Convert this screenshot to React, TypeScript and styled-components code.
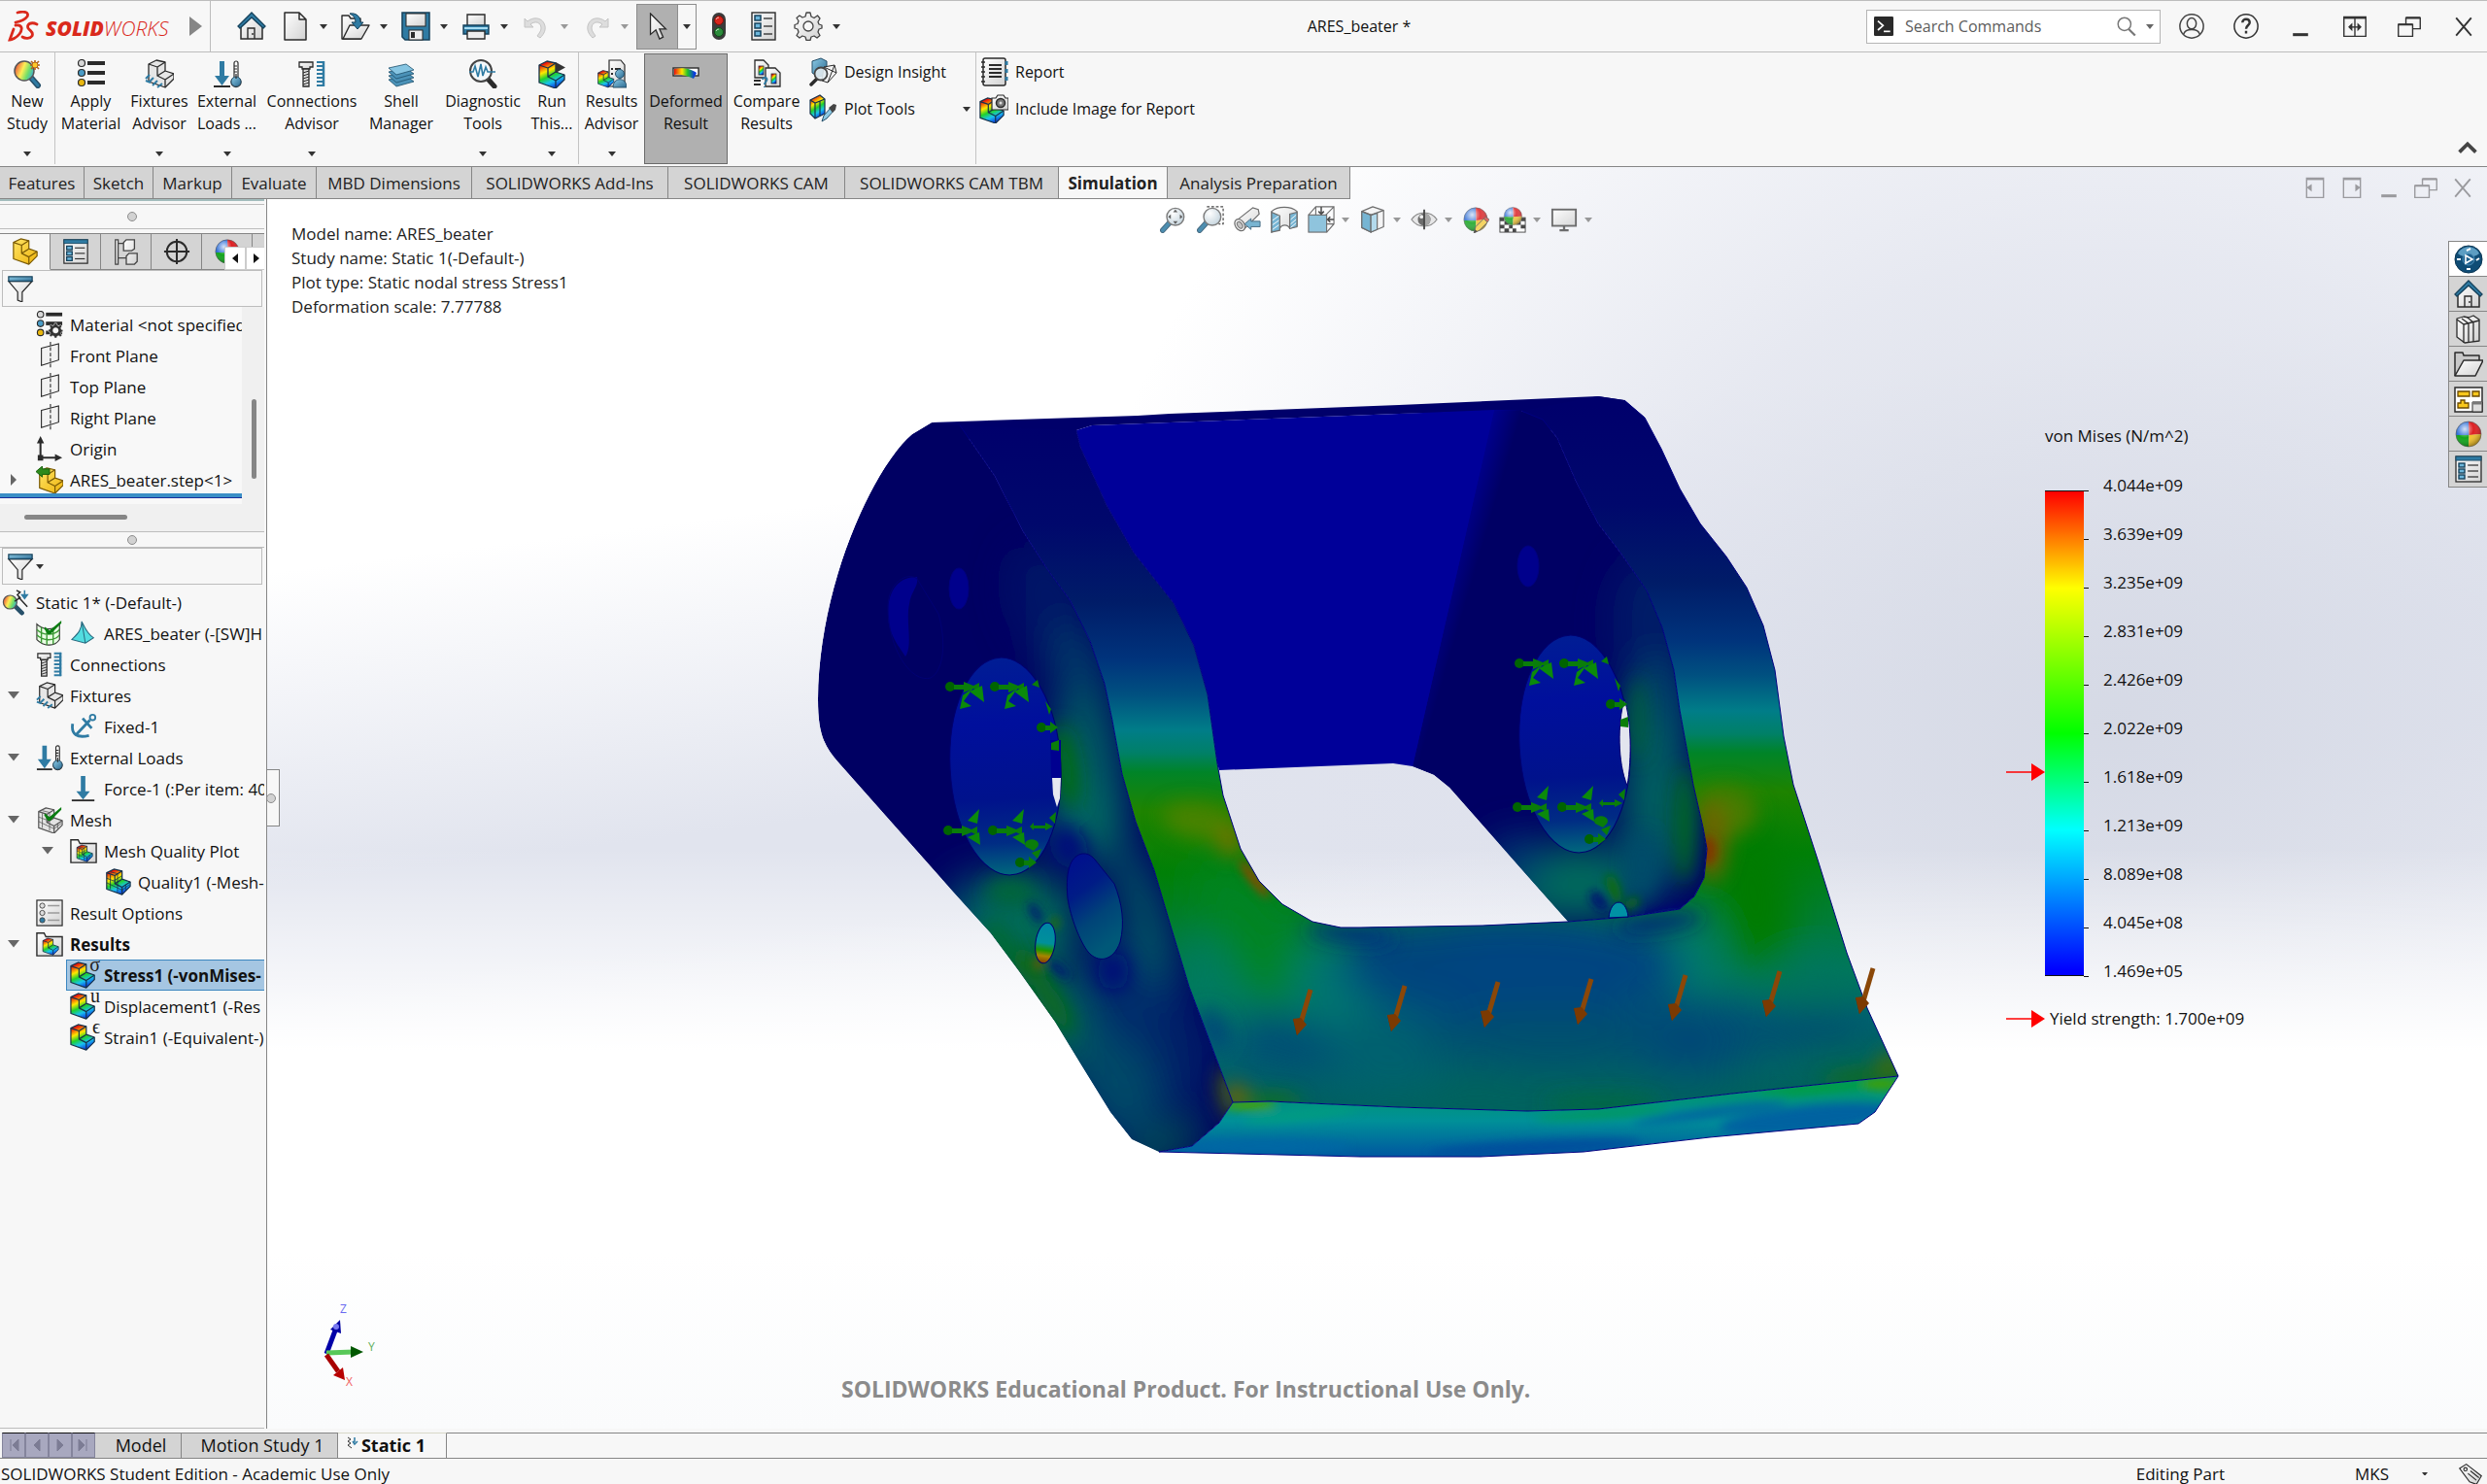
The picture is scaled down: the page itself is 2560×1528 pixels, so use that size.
import React from "react";
import styled, { createGlobalStyle, css } from "styled-components";

const FONT = '"Open Sans", "Noto Sans", sans-serif';

const GlobalStyle = createGlobalStyle`
  *, *::before, *::after { box-sizing: border-box; }
  body { margin: 0; background: #f7f7f7; color: #111; font-family: ${FONT}; font-size: 16px; line-height: 23px; }
  button, input { font: inherit; color: inherit; }
  button { margin: 0; padding: 0; border: 0; background: none; cursor: pointer; }
  ul { margin: 0; padding: 0; list-style: none; }
  p, h1 { margin: 0; font: inherit; }
`;

/* ---------- icons ---------- */

const K = "#2b2b2b";
const B = "#2f7ba3";

const SharedPaint = () => (
  <HiddenSvg aria-hidden="true" width="0" height="0">
    <defs>
      <linearGradient id="rainbow" x1="0.2" y1="0" x2="0.6" y2="1">
        <stop offset="0.08" stopColor="#e8120c" />
        <stop offset="0.35" stopColor="#ffe800" />
        <stop offset="0.55" stopColor="#1fd12c" />
        <stop offset="0.75" stopColor="#19c3ee" />
        <stop offset="1" stopColor="#0b2be0" />
      </linearGradient>
      <linearGradient id="rainbowX" x1="0" y1="0" x2="1" y2="0">
        <stop offset="0" stopColor="#e8120c" />
        <stop offset="0.35" stopColor="#ffe800" />
        <stop offset="0.6" stopColor="#1fc12c" />
        <stop offset="0.9" stopColor="#0b3be0" />
      </linearGradient>
      <linearGradient id="paper" x1="0" y1="0" x2="1" y2="1">
        <stop offset="0" stopColor="#ffffff" />
        <stop offset="1" stopColor="#d2d2d2" />
      </linearGradient>
      <linearGradient id="blue" x1="0" y1="0" x2="1" y2="1">
        <stop offset="0" stopColor="#8ccbe6" />
        <stop offset="1" stopColor="#2c6a91" />
      </linearGradient>
      <linearGradient id="yellow" x1="0" y1="0" x2="1" y2="1">
        <stop offset="0" stopColor="#ffe566" />
        <stop offset="1" stopColor="#eeb30c" />
      </linearGradient>
      <radialGradient id="shine" cx="0.35" cy="0.3" r="0.7">
        <stop offset="0" stopColor="#fff" stopOpacity="0.8" />
        <stop offset="0.5" stopColor="#fff" stopOpacity="0" />
        <stop offset="1" stopColor="#000" stopOpacity="0.3" />
      </radialGradient>
      <radialGradient id="lens" cx="0.35" cy="0.3" r="0.8">
        <stop offset="0" stopColor="#fff" />
        <stop offset="1" stopColor="#b7cad6" />
      </radialGradient>
      <linearGradient id="lensRainbow" x1="0" y1="0.3" x2="1" y2="0.7">
        <stop offset="0" stopColor="#e84a3c" />
        <stop offset="0.4" stopColor="#ffee55" />
        <stop offset="0.7" stopColor="#6ede6a" />
        <stop offset="1" stopColor="#39a9e0" />
      </linearGradient>
    </defs>
  </HiddenSvg>
);

const HiddenSvg = styled.svg`
  position: absolute;
`;

const block = (fill: string, stroke = K, grid = false) => (
  <g fill={fill} stroke={stroke} strokeWidth="1.3" strokeLinejoin="round">
    <path d="M1 5 9 1 18 3V12L27 15V20L18 29 1 23Z" />
    <path fill="none" d="M1 5 10 8 18 3M10 8V17L18 12M10 17 18 21 27 15M18 21V29" />
    {grid && <path fill="none" strokeWidth="0.8" d="M1 11 9 14M1 16 18 24 26 18M5 7V23M13 6V26M9 14 18 8M22 18V24M5 4 13 6" />}
  </g>
);

const ball = (
  <g>
    <path d="M15 2A13 13 0 0 0 2 16H15.500Z" fill="#2f6fd6" />
    <path d="M15 2A13 13 0 0 1 28 15L15.500 16Z" fill="#dd1f22" />
    <path d="M2 16A13 13 0 0 0 15 28L15.500 16Z" fill="#12a41d" />
    <path d="M28 15A13 13 0 0 1 15 28L15.500 16Z" fill="#f0c02b" />
    <circle cx="15" cy="15" r="13" fill="url(#shine)" stroke="#555" strokeWidth="0.6" />
  </g>
);

const listCard = (
  <g>
    <rect x="2" y="2" width="26" height="26" fill="url(#paper)" stroke={K} strokeWidth="1.3" />
    <rect x="2" y="2" width="26" height="4" fill={B} stroke="#1d4f6b" />
    {[9, 15, 21].map((y) => (
      <g key={y}>
        <rect x="5" y={y} width="6" height="4" fill="#6db7dc" stroke="#16425c" strokeWidth="1.4" />
        <path d={`M14 ${y + 2}H25`} stroke={K} strokeWidth="1.2" />
      </g>
    ))}
  </g>
);

const magnifier = (fill: string, handle = B) => (
  <g>
    <path d="M11 18 3 27" stroke="#27506a" strokeWidth="6" strokeLinecap="round" />
    <path d="M11 18 3 27" stroke={handle} strokeWidth="4" strokeLinecap="round" />
    <circle cx="17" cy="12" r="9.500" fill={fill} stroke="#666" strokeWidth="1.500" />
  </g>
);

const bolt = (
  <g>
    <path d="M2 3H16V8H13V10H5V8H2Z" fill="url(#paper)" stroke={K} strokeWidth="1.3" />
    <path d="M6 10H12V28H6Z" fill="#ddd" stroke={K} strokeWidth="1.3" />
    <path d="M6 14 12 12M6 17 12 15M6 20 12 18M6 23 12 21M6 26 12 24" stroke={K} strokeWidth="1" />
    <path d="M20 3H28M20 7H28M20 11H28M20 15H28M20 19H28M20 23H28M20 27H28" stroke={B} strokeWidth="2" />
    <path d="M27 2V28" stroke={B} strokeWidth="2.500" />
  </g>
);

const loads = (
  <g>
    <path d="M7 2H12V17H17L9.500 27 2 17H7Z" fill={B} />
    <path d="M1 28H18" stroke={K} strokeWidth="2" />
    <path d="M22 4A2 2 0 0 1 26 4V19A5 5 0 1 1 22 19Z" fill="#fff" stroke={K} strokeWidth="1.2" />
    <circle cx="24" cy="23" r="5" fill="url(#blue)" stroke="#27506a" />
    <path d="M22 7H25M22 10H25M22 13H25M24 15V20" stroke={K} strokeWidth="1.2" />
  </g>
);

const matList = (
  <g>
    {[
      [4, "#d8d8d8"],
      [14, "#4a9cc7"],
      [24, "#e9b70f"],
    ].map(([y, c]) => (
      <g key={String(y)}>
        <circle cx="5" cy={y as number} r="3.500" fill={c as string} stroke={K} strokeWidth="1.2" />
        <rect x="11" y={(y as number) - 2} width="18" height="4" fill={K} />
      </g>
    ))}
  </g>
);

const gearPath =
  "M13 1H17L18 5 21 6.500 24.500 4 27 7 25 10.500 26 13 29 14V17L26 18 25 21 27 24.500 24 27 21 25 18 26 17 29.500H13L12 26 9 25 6 27 3 24.500 5 21 4 18 1 17V13.500L4 12.500 5 9.500 3 6.500 6 4 9 6 12 5Z";

const funnel = (
  <g>
    <path d="M2 7 12 19V28L17 30V19L28 7Z" fill="url(#paper)" stroke={K} strokeWidth="1.3" />
    <rect x="2" y="2" width="26" height="5" fill="url(#blue)" stroke="#16425c" strokeWidth="1.3" />
  </g>
);

const folderBase = (
  <path d="M1 28V3H9L11 7H29V28Z" fill="url(#paper)" stroke={K} strokeWidth="1.5" />
);

const home = (
  <g>
    <path d="M4 15V28H26V15L15 5Z" fill="url(#paper)" stroke={K} strokeWidth="1.5" />
    <path d="M1 15 15 1 29 15 27 17 15 6 3 17Z" fill={B} stroke="#16425c" strokeWidth="1.3" />
    <path d="M11 28V17H18V28M16 22V24" fill="none" stroke={K} strokeWidth="1.4" />
  </g>
);

const check = <path d="M10 8 15 12 28 1V4L16 16H13L9 10Z" fill="#0a7d12" />;

const GLYPHS: Record<string, React.ReactNode> = {
  home,
  doc: <path d="M4 1H19L26 8V29H4ZM19 1V8H26" fill="url(#paper)" stroke={K} strokeWidth="1.5" strokeLinejoin="round" />,
  open: (
    <g stroke={K} strokeWidth="1.4" strokeLinejoin="round">
      <path d="M1 28V4H8L10 7H20V28Z" fill="url(#paper)" />
      <path d="M2 28 9 14H29L21 28Z" fill="url(#paper)" />
      <path d="M9 2C16 1 20 5 20 11H23L17 18 11 11H15C15 7 13 4 9 2Z" fill={B} stroke="#16425c" strokeWidth="1" />
    </g>
  ),
  save: (
    <g>
      <path d="M1 1H29V29H4L1 26Z" fill={B} stroke="#16425c" strokeWidth="1.5" />
      <rect x="5" y="2" width="20" height="13" fill="url(#paper)" stroke={K} />
      <rect x="8" y="19" width="14" height="10" fill="#ececec" stroke={K} />
      <rect x="10" y="21" width="4" height="6" fill={K} />
    </g>
  ),
  print: (
    <g stroke={K} strokeWidth="1.4">
      <path d="M6 14V3H24V14" fill="url(#paper)" />
      <path d="M2 14H28V23H2Z" fill={B} stroke="#16425c" />
      <path d="M3 17H27" stroke="#a7dcf2" strokeWidth="2" />
      <path d="M6 20H24V28H6Z" fill="#eee" />
    </g>
  ),
  undo: <path d="M3 7V16H12L9 13C14 9 20 11 20 17 20 20 18 22 16 25L19 27C23 23 26 18 23 12 20 6 12 5 6 10Z" fill="#ddd" stroke="#c4c4c4" />,
  redo: <path d="M27 7V16H18L21 13C16 9 10 11 10 17 10 20 12 22 14 25L11 27C7 23 4 18 7 12 10 6 18 5 24 10Z" fill="#ddd" stroke="#c4c4c4" />,
  cursor: <path d="M7 1V24L13 19 17 29 21 27 17 18H24Z" fill="url(#paper)" stroke={K} strokeWidth="1.4" />,
  traffic: (
    <g>
      <rect x="8" y="1" width="14" height="28" rx="7" fill="#3b3b3b" />
      <circle cx="15" cy="9" r="4.500" fill="#d8251c" stroke="#7c120c" />
      <circle cx="15" cy="21" r="4.500" fill="#2c8c3b" stroke="#0e4d18" />
      <path d="M12 8A3 3 0 0 1 15 6M12 20A3 3 0 0 1 15 18" stroke="#fff" fill="none" opacity="0.7" />
    </g>
  ),
  options: (
    <g>
      <rect x="3" y="1" width="24" height="28" fill="url(#paper)" stroke={K} strokeWidth="1.4" />
      {[4, 12, 20].map((y) => (
        <g key={y}>
          <rect x="6" y={y} width="6" height="5" fill="#6db7dc" stroke="#16425c" strokeWidth="1.5" />
          <path d={`M15 ${y + 3}H24`} stroke={K} strokeWidth="1.3" />
        </g>
      ))}
    </g>
  ),
  gear: (
    <g fill="url(#paper)" stroke="#444" strokeWidth="1.3" strokeLinejoin="round">
      <path d={gearPath} />
      <circle cx="15" cy="15" r="5" fill="#f7f7f7" />
    </g>
  ),
  newStudy: (
    <g>
      <path d="M19 19 26 27" stroke="#27506a" strokeWidth="6" strokeLinecap="round" />
      <path d="M19 19 26 27" stroke={B} strokeWidth="3" strokeLinecap="round" />
      <circle cx="12" cy="12" r="10" fill="url(#lensRainbow)" stroke="#555" strokeWidth="1.500" />
      <path d="M23 1V11M18 6H28M19 2 27 10M27 2 19 10" stroke="#b0621c" strokeWidth="1.6" />
      <circle cx="23" cy="6" r="3" fill="#ffc928" stroke="#b0621c" />
    </g>
  ),
  material: matList,
  fixture: (
    <g>
      <g transform="translate(3 0)">{block("#e6e6e6")}</g>
      <path d="M1 20 5 16M4 24 9 19M8 27 13 22M13 29 18 25M1 22 6 24" stroke={B} strokeWidth="2" />
    </g>
  ),
  loads,
  bolt,
  shell: (
    <g fill={B} stroke="#1d4f6b" strokeWidth="0.8">
      {[21, 17, 13, 9].map((y, i) => (
        <path key={y} d={`M2 ${y} 20 ${y - 4} 28 ${y + 2} 10 ${y + 7}Z`} fill={i === 3 ? "#86c5e2" : "#4b92b8"} />
      ))}
    </g>
  ),
  diag: (
    <g>
      <path d="M19 19 27 28" stroke={K} strokeWidth="5" strokeLinecap="round" />
      <circle cx="13" cy="12" r="11" fill="#f4f8fa" stroke="#444" strokeWidth="2" />
      <path d="M1 13H5L7 7 10 18 13 5 15 17 18 8 20 13H28" fill="none" stroke={B} strokeWidth="1.6" />
    </g>
  ),
  run: (
    <g>
      <g transform="translate(1 1)">{block("url(#rainbow)", "#16324a")}</g>
      <path d="M19 3 29 8.500 19 14Z" fill="#333" />
    </g>
  ),
  resAdvisor: (
    <g>
      <path d="M12 1H24L28 6V28H12Z" fill="url(#paper)" stroke={K} strokeWidth="1.2" />
      <path d="M14 10H16M14 15H16M18 10H24" stroke={K} strokeWidth="2" />
      <g transform="translate(0 11) scale(0.62)">{block("url(#rainbow)", "#16324a")}</g>
      <circle cx="23" cy="15" r="4.500" fill="url(#blue)" stroke="#27506a" />
      <path d="M16 29C16 18 30 18 30 29Z" fill="url(#blue)" stroke="#27506a" />
    </g>
  ),
  deformed: (
    <g>
      <rect x="2" y="9" width="26" height="8" fill="#fff" stroke={K} strokeWidth="1.4" />
      <path d="M3 10C14 8 22 11 26 14L23 20C16 17 10 15 3 16Z" fill="url(#rainbowX)" />
    </g>
  ),
  compare: (
    <g>
      <path d="M3 1H12L17 6V19H3Z" fill="url(#paper)" stroke={K} strokeWidth="1.3" />
      <path d="M14 9H24L29 14V28H14Z" fill="url(#paper)" stroke={K} strokeWidth="1.3" />
      <rect x="7" y="7" width="5" height="9" fill="url(#rainbow)" stroke={K} strokeWidth="0.8" />
      <rect x="20" y="15" width="5" height="10" fill="url(#rainbow)" stroke={K} strokeWidth="0.8" />
      <path d="M2 22H9M2 26H9" stroke={K} strokeWidth="2" />
      <path d="M11 21C12 17 17 19 15 22 14 24 13 24 13 26M13 28V29" fill="none" stroke={B} strokeWidth="2" />
    </g>
  ),
  insight: (
    <g>
      <path d="M4 4 13 1 19 4V18L10 20 4 16Z" fill="url(#blue)" stroke="#27506a" />
      <path d="M16 10 27 8 29 16 20 26 14 24ZM16 10 29 16M27 8 20 26" fill="#f4f4f4" stroke={K} strokeWidth="1" />
      <path d="M9 22 3 28" stroke={K} strokeWidth="3.500" strokeLinecap="round" />
      <circle cx="13" cy="17" r="6.500" fill="#e2ecf1" fillOpacity="0.9" stroke="#444" strokeWidth="1.8" />
    </g>
  ),
  plotTools: (
    <g>
      <path d="M2 6 12 1 17 5V20L7 25 2 20Z" fill="url(#rainbow)" stroke="#16324a" strokeWidth="1.2" />
      <path d="M2 6 7 9 17 5M7 9V25M12 7V22" fill="none" stroke="#16324a" strokeWidth="1.2" />
      <path d="M14 28 16 22 24 13 27 16 19 25Z" fill="#8ccbe6" stroke="#27506a" />
      <path d="M21 14 26 10 29 11 28 16 25 19Z" fill="#444" />
    </g>
  ),
  report: (
    <g>
      <rect x="4" y="1" width="23" height="28" rx="2" fill="url(#paper)" stroke={K} strokeWidth="1.5" />
      <path d="M10 8H23M10 12H23M10 16H23M10 20H23" stroke={K} strokeWidth="1.8" />
      <path d="M2 5H6M2 10H6M2 15H6M2 20H6M2 25H6" stroke={K} strokeWidth="1.5" />
      <path d="M28 4V8M28 12V16M28 20V24" stroke={B} strokeWidth="3" />
    </g>
  ),
  camera: (
    <g>
      <g transform="translate(0 3) scale(0.93)">{block("url(#rainbow)", "#16324a")}</g>
      <path d="M13 4H17L19 1H25L27 4H30V16H13Z" fill="url(#paper)" stroke={K} strokeWidth="1.2" />
      <circle cx="22" cy="9" r="4.500" fill="#777" stroke={K} strokeWidth="1.5" />
      <circle cx="22" cy="9" r="1.500" fill="#ddd" />
    </g>
  ),
  zoomFit: (
    <g>
      {magnifier("url(#lens)")}
      <path d="M17 4 19.500 7H14.500ZM17 20 19.500 17H14.500ZM9 12 12 9.500V14.500ZM25 12 22 9.500V14.500Z" fill="#444" />
    </g>
  ),
  zoomArea: (
    <g>
      <path d="M11 1H29V20H24" fill="none" stroke={K} strokeWidth="1.3" strokeDasharray="3 2" />
      {magnifier("url(#lens)")}
    </g>
  ),
  prevView: (
    <g>
      <path d="M2 17 21 2 27 4 28 9 10 27Z" fill="url(#paper)" stroke="#555" strokeWidth="1.3" />
      <ellipse cx="6.500" cy="21.500" rx="5" ry="7" transform="rotate(-35 6 21)" fill="#eee" stroke="#555" strokeWidth="1.3" />
      <ellipse cx="6.500" cy="21.500" rx="2.500" ry="4" transform="rotate(-35 6 21)" fill="#bbb" stroke="#555" />
      <path d="M12 20 19 14V17H29V23H19V26Z" fill="#62a9cb" stroke="#27506a" />
    </g>
  ),
  section: (
    <g stroke="#555" strokeWidth="1.3">
      <path d="M1 6C8 0 22 0 29 6V22L21 25C19 20 12 20 10 25L1 29Z" fill="url(#paper)" />
      <path d="M1 7 10 11V27L1 29Z" fill="#5fa9cd" />
      <path d="M29 7 21 9V25L29 23Z" fill="#5fa9cd" />
      <path d="M2 16 9 11M2 21 9 16M2 26 9 21M22 15 28 10M22 20 28 15M22 24 28 19" stroke="#fff" strokeWidth="1" />
    </g>
  ),
  orient: (
    <g stroke="#555" strokeWidth="1.2" fill="none">
      <path d="M1 10 9 1H29V20L21 29M9 1V10M29 1 20 10M9 20H29" />
      <rect x="1" y="10" width="20" height="19" fill="#7dbbd8" />
      <path d="M15 1V9M12 6 15 9 18 6M29 15H22M25 12 22 15 25 18" stroke={K} strokeWidth="1.6" />
    </g>
  ),
  cube: (
    <g stroke="#555" strokeWidth="1.3" strokeLinejoin="round">
      <path d="M3 6 15 1 27 5V23L13 29 3 24Z" fill="#f4f4f4" />
      <path d="M3 6 13 10V29L3 24Z" fill="#5fa9cd" />
      <path d="M13 10 20 8V26L13 29Z" fill="#a7d5ea" />
      <path d="M3 6 13 10 27 5" fill="none" />
    </g>
  ),
  eye: (
    <g>
      <path d="M1 15C8 5 22 5 29 15 22 25 8 25 1 15Z" fill="#e5e5e5" stroke="#777" strokeWidth="1.3" />
      <circle cx="15" cy="15" r="7" fill="#555" />
      <path d="M15 8A7 7 0 0 1 15 22Z" fill="#999" />
      <circle cx="12" cy="12" r="2" fill="#eee" />
      <path d="M15 4V26" stroke={K} strokeWidth="2" />
    </g>
  ),
  ball,
  ballPencil: (
    <g>
      {ball}
      <path d="M13 30 15 23 24 14 28 18 19 27Z" fill="#f5cf4b" stroke="#555" />
      <path d="M24 14 26 12 30 15 28 18Z" fill="#d6534a" stroke="#555" strokeWidth="0.8" />
      <path d="M13 30 14 26 17 28Z" fill="#333" />
    </g>
  ),
  scene: (
    <g>
      <rect x="1" y="13" width="28" height="16" fill="#fff" stroke={K} />
      <path d="M1 13H6V17H1ZM24 13H29V17H24ZM6 17H11V21H6ZM19 17H24V21H19ZM1 21H6V25H1ZM11 21H15V25H11ZM24 21H29V25H24ZM6 25H11V29H6ZM15 25H19V29H15Z" fill={K} />
      <g transform="translate(4 0) scale(0.76)">{ball}</g>
    </g>
  ),
  monitor: (
    <g>
      <rect x="2" y="4" width="26" height="18" fill="url(#paper)" stroke="#555" strokeWidth="2" />
      <path d="M15 22V26M10 27H20" stroke="#555" strokeWidth="2.500" />
    </g>
  ),
  compass: (
    <g>
      <circle cx="15" cy="15" r="14" fill="#0f4c75" stroke="#0a3552" />
      <path d="M4 9C8 0 22 0 26 9 20 14 10 14 4 9Z" fill="#6fb1d6" opacity="0.8" />
      <circle cx="15" cy="15" r="6" fill="#1d5f8c" stroke="#4c8fb8" />
      <path d="M12 11 19 15 12 19Z" fill="none" stroke="#fff" strokeWidth="1.6" />
      <path d="M13 6 17 4M3 15H7M23 16 26 14M13 25H17" stroke="#fff" strokeWidth="2" />
    </g>
  ),
  books: (
    <g fill="url(#paper)" stroke={K} strokeWidth="1.3" strokeLinejoin="round">
      <path d="M3 4 10 2 15 3 20 1 26 5V27L11 29 3 23Z" />
      <path d="M3 5 10 10V29M10 10 26 6M8 4 15 9V28M14 3 20 8V28" fill="none" />
    </g>
  ),
  folderOpen: (
    <g stroke={K} strokeWidth="1.5" strokeLinejoin="round">
      <path d="M1 27V3H9L10 6H26V12" fill="#c9c9c9" />
      <path d="M1 27 10 11H30L22 27Z" fill="url(#paper)" />
    </g>
  ),
  palette: (
    <g>
      <rect x="1" y="3" width="28" height="25" fill="#fff" stroke={K} strokeWidth="1.5" />
      <path d="M4 7H16V12H4ZM19 7H26V12H19ZM4 24V19H7V16H11V19H15V24Z" fill="#f8c71c" stroke="#6b4a00" strokeWidth="1.3" />
      <path d="M19 28V18H29V28Z" fill="#ddd" stroke={K} />
      <path d="M19 19H29" stroke="#777" strokeWidth="3" />
    </g>
  ),
  listCard,
  part: <g transform="translate(1 0)">{block("url(#yellow)", "#7a5a05")}</g>,
  partLinked: (
    <g>
      <g transform="translate(3 1)">{block("url(#yellow)", "#7a5a05")}</g>
      <path d="M0 6 7 0V3H15V9H7V12Z" fill="#2d8a1c" stroke="#155c0a" />
    </g>
  ),
  config: (
    <g fill="url(#paper)" stroke="#444" strokeWidth="1.4">
      <path d="M3 2H6V29H3ZM6 6H12M6 22H15" />
      <path d="M12 5 15 2H24V12L21 14H12ZM15 20 18 17H27V26L24 29H15Z" />
    </g>
  ),
  target: (
    <g fill="none" stroke={K} strokeWidth="2.200">
      <circle cx="15" cy="15" r="11" />
      <path d="M15 1V29M1 15H29" />
    </g>
  ),
  funnel,
  matGear: (
    <g>
      {matList}
      <g transform="translate(13 13) scale(0.58)" fill="#333" stroke="#f7f7f7">
        <path d={gearPath} />
        <circle cx="15" cy="15" r="5" fill="#f7f7f7" />
      </g>
    </g>
  ),
  plane: (
    <g fill="none" stroke={K} strokeWidth="1.2">
      <path d="M6 7 25 2V20L6 26Z" fill="#f2f2f2" />
      <path d="M16 0V30" strokeDasharray="4 2" />
    </g>
  ),
  origin: (
    <g>
      <path d="M5 6V25H24" fill="none" stroke={K} strokeWidth="2.200" />
      <path d="M5 1 9 9H1ZM29 25 21 21V29ZM2 22H8V28H2Z" fill={K} />
    </g>
  ),
  study: (
    <g>
      <path d="M15 20 22 27" stroke="#27506a" strokeWidth="5" strokeLinecap="round" />
      <circle cx="9" cy="15" r="7.500" fill="url(#lensRainbow)" stroke="#555" strokeWidth="1.3" />
      <path d="M16 2 20 4 17 7 20 10 14 14M18 9 28 20" fill="none" stroke={K} strokeWidth="1.6" />
      <path d="M25 2V8M22 7H28L25 11Z" stroke={B} fill={B} strokeWidth="1.6" />
    </g>
  ),
  meshPart: (
    <g>
      <path d="M1 5C8 12 20 12 26 5V22C20 31 8 29 1 22Z" fill="#e9ffe4" stroke="#333" strokeWidth="1.2" />
      <path d="M1 11C8 18 20 18 26 11M1 17C8 24 20 24 26 17M6 8V26M12 10V28M19 9V27" fill="none" stroke="#3c9a35" strokeWidth="1.5" />
      {check}
    </g>
  ),
  cone: <path d="M13 2C13 12 8 16 2 22L17 26 26 20C19 16 16 8 13 2ZM13 2 17 26" fill="#52dde0" stroke="#2a6a80" strokeWidth="1.1" />,
  anchor: (
    <g fill="none" stroke={B} strokeWidth="3">
      <circle cx="25" cy="5" r="3" strokeWidth="2" />
      <path d="M22 8 6 25M14 6 24 17M3 12C1 24 8 28 21 25" />
    </g>
  ),
  force: (
    <g>
      <path d="M12 1H17V18H22L14.500 27 7 18H12Z" fill={B} />
      <path d="M2 28H27" stroke={K} strokeWidth="2" />
    </g>
  ),
  mesh: (
    <g>
      <g transform="translate(2 1)">{block("#e3e3e3", "#555", true)}</g>
      {check}
    </g>
  ),
  folderMesh: (
    <g>
      {folderBase}
      <g transform="translate(7 8) scale(0.66)">{block("url(#rainbow)", "#16324a", true)}</g>
    </g>
  ),
  folderResult: (
    <g>
      {folderBase}
      <g transform="translate(7 8) scale(0.66)">{block("url(#rainbow)", "#16324a")}</g>
    </g>
  ),
  quality: <g transform="translate(2 0)">{block("url(#rainbow)", "#16324a", true)}</g>,
  resultOptions: (
    <g>
      <rect x="1" y="1" width="28" height="28" fill="url(#paper)" stroke={K} strokeWidth="1.3" />
      {[7, 15, 23].map((y) => (
        <g key={y}>
          <circle cx="7" cy={y} r="2.800" fill={y === 23 ? B : "#ddd"} stroke="#444" />
          <path d={`M13 ${y}H26`} stroke="#999" strokeWidth="1.6" />
        </g>
      ))}
    </g>
  ),
  result: block("url(#rainbow)", "#16324a"),
  user: (
    <g fill="none" stroke="#444" strokeWidth="1.6">
      <circle cx="15" cy="15" r="13" />
      <ellipse cx="15" cy="12" rx="5" ry="6" />
      <path d="M6 24C8 17 22 17 24 24" />
    </g>
  ),
  help: (
    <g fill="none" stroke="#333" strokeWidth="1.6">
      <circle cx="15" cy="15" r="13" />
      <path d="M11 11C11 6 19 6 19 11 19 14 15 14 15 18M15 20V23" strokeWidth="2.600" />
    </g>
  ),
  minimize: <path d="M6 25H24" stroke="currentColor" strokeWidth="3.500" />,
  split: (
    <g fill="none" stroke="currentColor" strokeWidth="1.6">
      <path d="M2 4H28V27H2ZM15 4V27M2 4H28" />
      <path d="M2 5H28" strokeWidth="2.500" />
      <path d="M7 16 12 11V21ZM23 16 18 11V21Z" fill="currentColor" stroke="none" />
      <path d="M9 16H21" />
    </g>
  ),
  restore: (
    <g fill="none" stroke="currentColor" strokeWidth="1.6">
      <path d="M2 13H19V27H2ZM11 13V5H28V18H19" />
      <path d="M2 13H19M11 5H28" strokeWidth="2.500" />
    </g>
  ),
  close: <path d="M6 5 24 26M24 5 6 26" stroke="currentColor" strokeWidth="2.200" />,
  dockLeft: (
    <g fill="none" stroke="currentColor" strokeWidth="1.6">
      <path d="M5 4H25V27H5Z" />
      <path d="M5 5H25" strokeWidth="2.500" />
      <path d="M5 15 11 11V20Z" fill="currentColor" stroke="none" />
    </g>
  ),
  dockRight: (
    <g fill="none" stroke="currentColor" strokeWidth="1.6">
      <path d="M5 4H25V27H5Z" />
      <path d="M5 5H25" strokeWidth="2.500" />
      <path d="M25 15 19 11V20Z" fill="currentColor" stroke="none" />
    </g>
  ),
  up: <path d="M6 20 15 11 24 20" fill="none" stroke="#444" strokeWidth="4" />,
  search: (
    <g fill="none" stroke="#777" strokeWidth="2">
      <circle cx="12" cy="12" r="9" />
      <path d="M18 19 27 28" strokeWidth="3" />
    </g>
  ),
  prompt: (
    <g>
      <rect x="0" y="0" width="30" height="30" rx="2" fill="#2a2a2a" />
      <path d="M6 7 14 14 6 21" fill="none" stroke="#fff" strokeWidth="2.500" />
      <path d="M15 23H25" stroke="#fff" strokeWidth="2.500" />
    </g>
  ),
  tag: (
    <g fill="url(#paper)" stroke={K} strokeWidth="1.3">
      <path d="M2 8 10 3 28 17 22 27 14 24Z" />
      <circle cx="9" cy="9" r="2" />
      <path d="M12 14 22 22M15 11 25 19" fill="none" />
    </g>
  ),
};

const Svg = styled.svg`
  display: block;
  flex: none;
`;

const Icon = ({ name, size = 28 }: { name: string; size?: number }) => (
  <Svg aria-hidden="true" viewBox="0 0 30 30" width={size} height={size}>
    {GLYPHS[name]}
  </Svg>
);

const Triangle = ({ tone = "#333", size = 8 }: { tone?: string; size?: number }) => (
  <Svg aria-hidden="true" viewBox="0 0 8 5" width={size} height={(size * 5) / 8}>
    <path d="M0 0H8L4 5Z" fill={tone} />
  </Svg>
);

/* ---------- frame ---------- */

const Frame = styled.div`
  display: flex;
  flex-direction: column;
  min-height: 100vh;
  border-top: 1px solid #bdbdbd;
`;

const TitleBar = styled.header`
  display: flex;
  align-items: center;
  height: 53px;
  border-bottom: 1px solid #bdbdbd;
  background: #f7f7f7;
`;

const Brand = styled.div`
  display: flex;
  align-items: center;
  align-self: stretch;
  width: 217px;
  padding-left: 8px;
  border-right: 1px solid #bdbdbd;
`;

const BrandName = styled.span`
  width: 148px;
  margin-left: 7px;
  padding-top: 4px;
  color: #da291c;
  font: italic 300 21px/24px "Open Sans", sans-serif;
  b { font-weight: 800; }
`;

const IconButton = styled.button<{ $w?: number; $tone?: string }>`
  display: flex;
  align-items: center;
  justify-content: center;
  width: ${(p) => p.$w ?? 34}px;
  height: 34px;
  color: ${(p) => p.$tone ?? "#333"};
`;

const CaretButton = styled(IconButton)`
  width: 24px;
`;

const ToolGroup = styled.div`
  display: flex;
  margin-right: 4px;
`;

const HomeSlot = styled.div`
  margin: 0 11px 0 25px;
`;

const SelectTool = styled.div`
  display: flex;
  height: 47px;
  margin-left: -4px;
  border: 1px solid #8d8d8d;
`;

const SelectMain = styled.button`
  display: flex;
  align-items: center;
  justify-content: center;
  width: 42px;
  border-right: 1px solid #8d8d8d;
  background: #b0b0b0;
`;

const SelectCaret = styled.button`
  display: flex;
  align-items: center;
  justify-content: center;
  width: 18px;
`;

const ToolRun = styled.div`
  display: flex;
  gap: 12px;
  margin-left: 6px;
`;

const DocTitle = styled.h1`
  flex: 1;
  text-align: center;
`;

const SearchBox = styled.div`
  display: flex;
  align-items: center;
  width: 303px;
  height: 35px;
  margin-right: 16px;
  padding-left: 7px;
  border: 1px solid #b5b5b5;
  background: #fff;
`;

const SearchInput = styled.input`
  flex: 1;
  min-width: 0;
  margin: 0 0 0 12px;
  padding: 0;
  border: 0;
  outline: 0;
  background: none;
  &::placeholder { color: #5c5c5c; opacity: 1; }
`;

const WindowButtons = styled.div`
  display: flex;
  gap: 24px;
  padding-right: 8px;
`;

/* ---------- ribbon ---------- */

const Ribbon = styled.div`
  display: flex;
  height: 118px;
  border-bottom: 1px solid #868686;
  background: #f7f7f7;
`;

const RibbonGroup = styled.div<{ $last?: boolean }>`
  display: flex;
  height: 115px;
  padding-top: 1px;
  border-right: ${(p) => (p.$last ? "0" : "1px solid #c4c4c4")};
`;

const RibbonButton = styled.button<{ $w: number; $active?: boolean }>`
  display: flex;
  flex-direction: column;
  align-items: center;
  width: ${(p) => p.$w}px;
  height: 114px;
  padding-top: 5px;
  border: 1px solid transparent;
  ${(p) => p.$active && css`border-color: #6b6b6b; background: #b0b0b0;`}
`;

const RibbonLabel = styled.span`
  margin-top: 2px;
  white-space: pre;
`;

const RibbonCaret = styled.span`
  margin-top: 17px;
`;

const RibbonStack = styled.div<{ $w: number }>`
  display: flex;
  flex-direction: column;
  width: ${(p) => p.$w}px;
  padding: 0 3px;
`;

const RowButton = styled.button`
  display: flex;
  align-items: center;
  gap: 7px;
  height: 38px;
  white-space: nowrap;
  svg:last-child:not(:first-child) { margin-left: auto; margin-right: 2px; }
`;

const Collapse = styled(IconButton)`
  align-self: flex-end;
  margin: 0 3px 2px auto;
`;

/* ---------- main area ---------- */

const Main = styled.main`
  display: flex;
  flex: 1;
  flex-direction: column;
  background:
    linear-gradient(to bottom, rgba(255, 255, 255, 0) 54%, rgba(255, 255, 255, 0.45) 61%, #fff 70%, #fff 86%, #fafbfc 100%),
    radial-gradient(ellipse 42% 74% at 85% 44%, rgba(213, 217, 229, 0.95), rgba(222, 225, 236, 0.75) 50%, rgba(230, 233, 242, 0)),
    linear-gradient(173deg, #fff 28%, #e1e4ee 48%, #e1e4ee 55%, #fff 72%);
`;

const TabRow = styled.div`
  display: flex;
  height: 33px;
`;

const Tabs = styled.div`
  display: flex;
`;

const Tab = styled.button<{ $w: number; $active?: boolean }>`
  width: ${(p) => p.$w}px;
  border-right: 1px solid #868686;
  border-bottom: 1px solid #868686;
  background: ${(p) => (p.$active ? "#f7f7f7" : "#d4d4d4")};
  color: #222;
  font-size: 17px;
  font-weight: ${(p) => (p.$active ? 700 : 400)};
  white-space: nowrap;
`;

const DocButtons = styled.div`
  display: flex;
  align-items: center;
  gap: 4px;
  margin-left: auto;
  padding: 8px 8px 0 0;
`;

const Workspace = styled.div`
  display: flex;
  flex: 1;
`;

const Side = styled.aside`
  display: flex;
  flex-direction: column;
  width: 275px;
  padding-right: 2px;
  border-right: 1px solid #868686;
  background: #f7f7f7;
  font-size: 17px;
`;

const SidePane = styled.div<{ $grow?: boolean }>`
  display: flex;
  flex-direction: column;
  flex: ${(p) => (p.$grow ? "1" : "none")};
  padding-top: ${(p) => (p.$grow ? "0" : "3px")};
  border-top: ${(p) => (p.$grow ? "0" : "2px solid #a3bcbc")};
  border-bottom: ${(p) => (p.$grow ? "1px solid #bdbdbd" : "0")};
`;

const Grip = styled.div<{ $h: number }>`
  display: flex;
  align-items: center;
  justify-content: center;
  height: ${(p) => p.$h}px;
  border: solid #bdbdbd;
  border-width: 1px 0;
`;

const Knob = styled.span`
  width: 10px;
  height: 10px;
  border: 1px solid #8d8d8d;
  border-radius: 50%;
  background: #d2d2d2;
`;

const PaneTabs = styled.div`
  display: flex;
  position: relative;
  height: 38px;
  margin-top: 4px;
  overflow: hidden;
  border-top: 1px solid #868686;
`;

const PaneTab = styled.button<{ $active?: boolean }>`
  display: flex;
  flex: none;
  align-items: center;
  justify-content: center;
  width: 52px;
  border-right: 1px solid #868686;
  border-bottom: 1px solid ${(p) => (p.$active ? "transparent" : "#868686")};
  background: ${(p) => (p.$active ? "#f7f7f7" : "#d4d4d4")};
`;

const PaneScroll = styled.div`
  display: flex;
  position: absolute;
  right: -3px;
  bottom: 0;
  background: #fff;
`;

const PaneScrollButton = styled.button`
  display: flex;
  align-items: center;
  justify-content: center;
  width: 22px;
  height: 24px;
  border: 1px solid #ccc;
`;

const FilterBar = styled.button`
  display: flex;
  align-items: center;
  gap: 2px;
  height: 38px;
  margin: 0 2px;
  padding-left: 4px;
  border: 1px solid #bdbdbd;
`;

const TreeScroller = styled.div`
  display: grid;
  grid-template-columns: 249px 1fr;
  grid-template-rows: 203px 1fr;
  height: 231px;
  background: #f0f0f0;
`;

const TreeView = styled.div`
  overflow: hidden;
  background: #f8f8f8;
`;

const TreeList = styled.ul`
  padding-top: 2px;
`;

const Row = styled.li<{ $level: number }>`
  display: flex;
  align-items: center;
  height: 32px;
  padding-left: ${(p) => p.$level * 35}px;
  overflow: hidden;
  white-space: nowrap;
`;

const Expander = styled.button`
  display: flex;
  flex: none;
  align-items: center;
  justify-content: center;
  width: 28px;
  height: 32px;
`;

const Gap = styled.span`
  flex: none;
  width: 28px;
`;

const RowLabel = styled.button<{ $selected?: boolean; $bold?: boolean; $root?: boolean }>`
  display: flex;
  flex: 1;
  align-items: center;
  gap: 7px;
  height: 32px;
  margin-left: ${(p) => (p.$root ? "-28px" : "5px")};
  padding-left: ${(p) => (p.$root ? "1px" : "3px")};
  border: 1px solid ${(p) => (p.$selected ? "#3b86c0" : "transparent")};
  border-right: 0;
  background: ${(p) => (p.$selected ? "#a5c6e2" : "none")};
  font-weight: ${(p) => (p.$bold ? 700 : 400)};
  white-space: nowrap;
`;

const GlyphWrap = styled.span`
  position: relative;
  flex: none;
  sup {
    position: absolute;
    top: -4px;
    right: -3px;
    color: #222;
    font: 400 20px/14px "Liberation Serif", serif;
  }
`;

const Rollback = styled.div`
  height: 5px;
  margin-top: -2px;
  border-bottom: 1px solid #1b2f9c;
  background: #3a8fc6;
`;

const VThumb = styled.span`
  justify-self: center;
  width: 5px;
  height: 82px;
  margin: 95px 0 0 2px;
  border-radius: 3px;
  background: #868686;
`;

const HThumb = styled.span`
  width: 106px;
  height: 5px;
  margin: 11px 0 0 25px;
  border-radius: 3px;
  background: #868686;
`;

/* ---------- viewport ---------- */

const Viewport = styled.section`
  position: relative;
  flex: 1;
  min-width: 0;
  overflow: hidden;
  font-size: 17px;
`;

const SceneSvg = styled.svg`
  position: absolute;
  inset: 0;
  width: 100%;
  height: 100%;
`;

const StudyInfo = styled.div`
  position: absolute;
  top: 23px;
  left: 25px;
  color: #222;
  line-height: 25px;
`;

const Hud = styled.div`
  display: flex;
  position: absolute;
  top: 4px;
  left: 916px;
  gap: 4px;
  opacity: 0.85;
`;

const HudPair = styled.div`
  display: flex;
`;

const HudCaret = styled(IconButton)`
  width: 15px;
`;

const SideHandle = styled.button`
  display: flex;
  position: absolute;
  top: 587px;
  left: -1px;
  align-items: center;
  width: 14px;
  height: 59px;
  border: 1px solid #868686;
  border-left: 0;
  background: #f7f7f7;
`;

const Legend = styled.div`
  position: absolute;
  top: 232px;
  right: 235px;
  width: 260px;
  color: #111;
`;

const LegendTitle = styled.p`
  padding-left: 40px;
`;

const LegendBody = styled.div`
  display: flex;
  margin-top: 14px;
`;

const Scale = styled.div`
  width: 40px;
  height: 500px;
  margin-top: 31px;
  border: solid #111;
  border-width: 1px 0;
  background: linear-gradient(#f00, #ff0 20%, #0f0 50%, #0ff 70%, #00f 99%);
`;

const MarkerColumn = styled.div`
  width: 40px;
  padding-top: 311px;
`;

const LegendList = styled.ul`
  margin: 0;
`;

const LegendItem = styled.li`
  display: flex;
  align-items: center;
  height: 50px;
  &::before {
    content: "";
    align-self: flex-end;
    width: 5px;
    height: 1px;
    margin: 0 15px 18px 0;
    background: #111;
  }
`;

const Yield = styled.p`
  display: flex;
  align-items: center;
  gap: 5px;
  margin-top: 13px;
  white-space: nowrap;
`;

const Watermark = styled.p`
  position: absolute;
  left: 591px;
  bottom: 25px;
  color: #8b8b8b;
  font-size: 23px;
  font-weight: 700;
  line-height: 32px;
  white-space: nowrap;
`;

const TriadSvg = styled.svg`
  position: absolute;
  left: 45px;
  bottom: 36px;
`;

const TaskPane = styled.nav`
  display: flex;
  position: absolute;
  top: 43px;
  right: 0;
  flex-direction: column;
  border: 1px solid #868686;
  border-right: 0;
`;

const TaskButton = styled.button<{ $active?: boolean }>`
  display: flex;
  align-items: center;
  justify-content: center;
  width: 39px;
  height: 36px;
  border-bottom: 1px solid #868686;
  background: ${(p) => (p.$active ? "#fff" : "#d4d4d4")};
  &:last-child { border-bottom: 0; }
`;

/* ---------- bottom ---------- */

const StudyTabs = styled.div`
  display: flex;
  height: 31px;
  padding: 4px 0 0 2px;
  border-bottom: 1px solid #868686;
  background: #f7f7f7;
  font-size: 18px;
`;

const StepButton = styled.button`
  display: flex;
  align-items: center;
  justify-content: center;
  width: 24px;
  border: 1px solid #84849c;
  border-top-color: #111;
  background: #a8a8bf;
`;

const StudyTab = styled.button<{ $w: number; $active?: boolean }>`
  display: flex;
  align-items: center;
  justify-content: center;
  gap: 3px;
  width: ${(p) => p.$w}px;
  padding-left: ${(p) => (p.$active ? 0 : 6)}px;
  padding-right: ${(p) => (p.$active ? 12 : 0)}px;
  border-top: 1px solid ${(p) => (p.$active ? "#d8d8c8" : "#868686")};
  border-right: 1px solid #868686;
  background: ${(p) => (p.$active ? "#f7f7f7" : "#d4d4d4")};
  font-weight: ${(p) => (p.$active ? 700 : 400)};
`;

const StudyFill = styled.div`
  flex: 1;
  border-top: 1px solid #868686;
`;

const StatusBar = styled.footer`
  display: flex;
  align-items: center;
  height: 26px;
  padding: 5px 4px 0 1px;
  background: #f7f7f7;
  font-size: 17px;
`;

const StatusUnits = styled.button`
  display: flex;
  align-items: center;
  gap: 34px;
  margin: 0 31px 0 134px;
`;

const StatusMode = styled.span`
  margin-left: auto;
`;

/* ---------- data ---------- */

const RIBBON_A = [
  { label: "Apply\nMaterial", icon: "material", w: 73 },
  { label: "Fixtures\nAdvisor", icon: "fixture", w: 68, caret: true },
  { label: "External\nLoads ...", icon: "loads", w: 71, caret: true },
  { label: "Connections\nAdvisor", icon: "bolt", w: 104, caret: true },
  { label: "Shell\nManager", icon: "shell", w: 80 },
  { label: "Diagnostic\nTools", icon: "diag", w: 88, caret: true },
  { label: "Run\nThis...", icon: "run", w: 54, caret: true },
];

const RIBBON_B = [
  { label: "Results\nAdvisor", icon: "resAdvisor", w: 67, caret: true },
  { label: "Deformed\nResult", icon: "deformed", w: 86, active: true },
  { label: "Compare\nResults", icon: "compare", w: 80 },
];

const TABS: [string, number][] = [
  ["Features", 87],
  ["Sketch", 71],
  ["Markup", 81],
  ["Evaluate", 87],
  ["MBD Dimensions", 160],
  ["SOLIDWORKS Add-Ins", 202],
  ["SOLIDWORKS CAM", 182],
  ["SOLIDWORKS CAM TBM", 220],
  ["Simulation", 112],
  ["Analysis Preparation", 188],
];

type Node = {
  label: string;
  icon: string;
  level: number;
  open?: boolean;
  closed?: boolean;
  bold?: boolean;
  selected?: boolean;
  extra?: string;
  sup?: string;
  root?: boolean;
};

const FEATURE_TREE: Node[] = [
  { label: "Material <not specified>", icon: "matGear", level: 0 },
  { label: "Front Plane", icon: "plane", level: 0 },
  { label: "Top Plane", icon: "plane", level: 0 },
  { label: "Right Plane", icon: "plane", level: 0 },
  { label: "Origin", icon: "origin", level: 0 },
  { label: "ARES_beater.step<1>", icon: "partLinked", level: 0, closed: true },
];

const STUDY_TREE: Node[] = [
  { label: "Static 1* (-Default-)", icon: "study", level: 0, root: true },
  { label: "ARES_beater (-[SW]H", icon: "meshPart", extra: "cone", level: 0 },
  { label: "Connections", icon: "bolt", level: 0 },
  { label: "Fixtures", icon: "fixture", level: 0, open: true },
  { label: "Fixed-1", icon: "anchor", level: 1 },
  { label: "External Loads", icon: "loads", level: 0, open: true },
  { label: "Force-1 (:Per item: 40", icon: "force", level: 1 },
  { label: "Mesh", icon: "mesh", level: 0, open: true },
  { label: "Mesh Quality Plot", icon: "folderMesh", level: 1, open: true },
  { label: "Quality1 (-Mesh-", icon: "quality", level: 2 },
  { label: "Result Options", icon: "resultOptions", level: 0 },
  { label: "Results", icon: "folderResult", level: 0, open: true, bold: true },
  { label: "Stress1 (-vonMises-", icon: "result", level: 1, bold: true, selected: true, sup: "σ" },
  { label: "Displacement1 (-Res", icon: "result", level: 1, sup: "u" },
  { label: "Strain1 (-Equivalent-)", icon: "result", level: 1, sup: "ϵ" },
];

const LEGEND_VALUES = [
  "4.044e+09", "3.639e+09", "3.235e+09", "2.831e+09", "2.426e+09", "2.022e+09",
  "1.618e+09", "1.213e+09", "8.089e+08", "4.045e+08", "1.469e+05",
];

const HUD_TOOLS: [string, string, boolean][] = [
  ["zoomFit", "Zoom to Fit", false],
  ["zoomArea", "Zoom to Area", false],
  ["prevView", "Previous View", false],
  ["section", "Section View", false],
  ["orient", "View Orientation", true],
  ["cube", "Display Style", true],
  ["eye", "Hide/Show Items", true],
  ["ballPencil", "Edit Appearance", false],
  ["scene", "Apply Scene", true],
  ["monitor", "View Settings", true],
];

/* ---------- model ---------- */

const P = {
  left: "M959 435 939 447C900 480 843 600 842 720C842 755 848 768 863 785L980 917 1020 961 1049 1000 1086 1052 1114 1098 1143 1145 1165 1173 1193 1186 1227 1180 1255 1156 1269 1135 1224 1016 1204 950 1188 896 1169 846 1155 797 1145 742 1137 704 1122 660 1102 619 1078 586 1053 547 1024 490 988 438Z",
  innerEdge: "M988 438 1024 490 1053 547 1078 586 1102 619 1122 660 1137 704 1145 742 1155 797 1169 846 1188 896 1204 950 1224 1016 1269 1135",
  top: "M959 435 1171 428 1204 426 1440 417 1645 408 1672 412 1693 430 1600 445 1566 423 1440 426 1124 438 1108 443 1100 470 988 450Z",
  back: "M1108 443 1124 438 1440 426 1538 422 1566 423 1470 795 1454 789 1434 786 1255 793 1253 786 1243 715 1229 665 1208 621 1167 569 1139 520 1112 460Z",
  right: "M1538 422 1566 423 1588 432 1603 451 1622 495 1645 539 1668 569 1695 608 1711 646 1723 690 1729 731 1737 775 1743 808 1753 852 1757 874 1754 904 1744 923 1729 936 1676 944 1614 949 1492 811 1476 798 1454 789Z",
  front: "M988 438 1024 490 1053 547 1078 586 1102 619 1122 660 1137 704 1145 742 1155 797 1169 846 1188 896 1204 950 1224 1016 1269 1135 1308 1134 1349 1136 1440 1140 1572 1144 1645 1142 1783 1126 1954 1108 1922 1038 1901 981 1871 885 1846 808 1836 758 1827 690 1815 644 1798 605 1777 573 1750 539 1729 503 1710 462 1693 430 1672 412 1645 408 1566 423 1588 432 1603 451 1622 495 1645 539 1668 569 1695 608 1711 646 1723 690 1729 731 1737 775 1743 808 1753 852 1757 874 1754 904 1744 923 1729 936 1676 944 1614 949 1526 953 1400 955 1380 955 1351 949 1320 931 1296 907 1277 874 1259 819 1253 786 1243 715 1229 665 1208 621 1167 569 1139 520 1112 460 1108 443Z",
  edges: "M1108 443 1112 460 1139 520 1167 569 1208 621 1229 665 1243 715 1253 786 1259 819 1277 874 1296 907 1320 931 1351 949 1380 955 1400 955 1526 953 1614 949 1676 944 1729 936 1744 923 1754 904 1757 874 1753 852 1743 808 1737 775 1729 731 1723 690 1711 646 1695 608 1668 569 1645 539 1622 495 1603 451 1588 432 1566 423M1672 412 1693 430 1710 462 1729 503 1750 539 1777 573 1798 605 1815 644 1827 690 1836 758 1846 808 1871 885 1901 981 1922 1038 1954 1108",
  strip: "M1269 1135 1308 1134 1349 1136 1440 1140 1572 1144 1645 1142 1783 1126 1954 1108 1930 1145 1913 1157 1760 1171 1630 1186 1524 1191 1400 1191 1193 1186 1227 1180 1255 1156Z",
  slot: "M1114 879C1104 881 1096 892 1099 925 1102 945 1112 970 1120 980 1130 992 1146 990 1153 970 1158 950 1155 930 1147 910L1127 885Q1121 878 1114 879Z",
};

const Blob = ({ c, x, y, rx, ry, r = 0 }: { c: string; x: number; y: number; rx: number; ry: number; r?: number }) => (
  <ellipse cx={x} cy={y} rx={rx} ry={ry} fill={c} transform={`rotate(${r} ${x} ${y})`} />
);

const bandStops = [
  [438, "#00006c"], [540, "#00086c"], [620, "#001c68"], [680, "#00347c"], [715, "#005080"], [752, "#007d88"],
  [775, "#008068"], [795, "#008428"], [835, "#1f8400"], [900, "#008008"], [960, "#007d34"], [1020, "#00785c"],
  [1070, "#006470"], [1140, "#006060"],
] as const;

const Pin = ({ x, y }: { x: number; y: number }) => (
  <g transform={`translate(${x} ${y})`}>
    <circle r="5" fill="#006400" />
    <path d="M4-2H14V-5L24-1 30-4V5L24 2 14 6V3H4Z" fill="#0a7d0a" />
  </g>
);

const FixtureMarks = () => (
  <g>
    {[978, 1024].map((x) => (
      <g key={x}>
        <Pin x={x} y={707} />
        <path d={`M${x + 20} 712 ${x + 35} 723 ${x + 33} 706ZM${x + 24} 708 ${x + 14} 722 ${x + 22} 727 ${x + 10} 730 ${x + 13} 716Z`} fill="#0b8a0b" />
      </g>
    ))}
    <path d="M1062 705 1068 700 1070 708ZM1076 722 1082 730 1080 736Z" fill="#0a7d0a" />
    <g transform="translate(1072 749)">
      <circle r="5" fill="#006400" />
      <path d="M4-2H9V-6L17 0 9 6V3H4Z" fill="#0a7d0a" />
    </g>
    <path d="M1082 765 1090 762 1090 773 1082 772Z" fill="#0a7d0a" />
    {[976, 1022].map((x) => (
      <g key={x}>
        <Pin x={x} y={855} />
        <path d={`M${x + 20} 845 ${x + 32} 833 ${x + 30} 848ZM${x + 20} 862 ${x + 33} 870 ${x + 32} 857Z`} fill="#0b8a0b" />
      </g>
    ))}
    <path d="M1060 851 1064 847V850H1076V847L1084 851 1076 855V853H1064V855ZM1080 842 1087 836 1086 848ZM1056 872A7 5 0 1 1 1068 872L1064 876ZM1062 878 1072 874 1068 884Z" fill="#0a7d0a" />
    <g transform="translate(1050 888)">
      <circle r="5" fill="#006400" />
      <path d="M4-2H9V-6L17 0 9 6V3H4Z" fill="#0a7d0a" />
    </g>
  </g>
);

const FORCES = [
  [1349, 1019], [1446, 1015], [1542, 1011], [1638, 1008], [1735, 1004], [1832, 1000], [1928, 997],
];

const Model = () => (
  <SceneSvg viewBox="275 205 2285 1266" role="img" aria-label="Stress plot of the deformed ARES_beater part">
    <defs>
      <linearGradient id="bandL" gradientUnits="userSpaceOnUse" x1="0" y1="438" x2="0" y2="1140">
        {bandStops.map(([y, c]) => (
          <stop key={y} offset={(y - 438) / 702} stopColor={c} />
        ))}
      </linearGradient>
      <linearGradient id="bandR" gradientUnits="userSpaceOnUse" x1="0" y1="418" x2="0" y2="1120">
        {bandStops.map(([y, c]) => (
          <stop key={y} offset={(y - 438) / 702} stopColor={c} />
        ))}
      </linearGradient>
      <linearGradient id="rightFace" gradientUnits="userSpaceOnUse" x1="1478" y1="600" x2="1512" y2="610">
        <stop offset="0" stopColor="#000099" />
        <stop offset="1" stopColor="#000064" />
      </linearGradient>
      <linearGradient id="bore" x1="0" y1="0" x2="0" y2="1">
        <stop offset="0" stopColor="#001d94" />
        <stop offset="0.3" stopColor="#000f9c" />
        <stop offset="0.65" stopColor="#00128c" />
        <stop offset="0.85" stopColor="#002c84" />
        <stop offset="1" stopColor="#00687c" />
      </linearGradient>
      <linearGradient id="stripFill" gradientUnits="userSpaceOnUse" x1="0" y1="1130" x2="0" y2="1190">
        <stop offset="0" stopColor="#009478" />
        <stop offset="0.4" stopColor="#009098" />
        <stop offset="1" stopColor="#0058a0" />
      </linearGradient>
      <linearGradient id="slotFill" x1="0" y1="0" x2="0.4" y2="1">
        <stop offset="0" stopColor="#000c90" />
        <stop offset="0.4" stopColor="#001c86" />
        <stop offset="0.7" stopColor="#004478" />
        <stop offset="1" stopColor="#005878" />
      </linearGradient>
      <linearGradient id="pinHole" x1="0" y1="0" x2="0" y2="1">
        <stop offset="0" stopColor="#0084a4" />
        <stop offset="0.5" stopColor="#00909a" />
        <stop offset="0.68" stopColor="#1e9400" />
        <stop offset="0.82" stopColor="#a88400" />
        <stop offset="1" stopColor="#803c00" />
      </linearGradient>
      <filter id="soft" x="-50%" y="-50%" width="200%" height="200%"><feGaussianBlur stdDeviation="20" /></filter>
      <filter id="fine" x="-50%" y="-50%" width="200%" height="200%"><feGaussianBlur stdDeviation="10" /></filter>
      <filter id="crisp" x="-50%" y="-50%" width="200%" height="200%"><feGaussianBlur stdDeviation="5" /></filter>
      <clipPath id="clipLeft"><path d={P.left} /></clipPath>
      <clipPath id="clipFront"><path d={P.front} /></clipPath>
      <clipPath id="clipRight"><path d={P.right} /></clipPath>
      <clipPath id="clipStrip"><path d={P.strip} /></clipPath>
    </defs>

    <path d={P.top} fill="#00006a" />
    <path d={P.back} fill="#000099" />

    <g clipPath="url(#clipRight)">
      <path d={P.right} fill="url(#rightFace)" />
      <g filter="url(#soft)">
        <Blob c="#001c68" x={1700} y={640} rx={40} ry={70} />
        <Blob c="#004a68" x={1706} y={740} rx={34} ry={60} />
        <Blob c="#00605f" x={1704} y={830} rx={36} ry={90} />
        <Blob c="#006a5c" x={1620} y={910} rx={80} ry={40} />
        <Blob c="#003c70" x={1560} y={890} rx={30} ry={30} />
        <Blob c="#004a68" x={1690} y={895} rx={24} ry={40} />
      </g>
      <g filter="url(#fine)">
        <Blob c="#006b1c" x={1734} y={850} rx={10} ry={60} />
        <Blob c="#006c30" x={1686} y={740} rx={7} ry={44} />
        <Blob c="#004c6a" x={1690} y={890} rx={14} ry={34} />
      </g>
      <g filter="url(#crisp)">
        <Blob c="#0a6c10" x={1661} y={915} rx={6} ry={16} r={-20} />
        <Blob c="#0a6c10" x={1680} y={930} rx={8} ry={5} r={-30} />
        <Blob c="#001470" x={1646} y={928} rx={7} ry={12} r={-40} />
        <Blob c="#00107c" x={1715} y={942} rx={28} ry={6} r={-10} />
      </g>
    </g>

    <g clipPath="url(#clipLeft)">
      <path d={P.left} fill="#000063" />
      <g filter="url(#soft)">
        <Blob c="#001868" x={1080} y={620} rx={36} ry={60} r={-20} />
        <Blob c="#003868" x={1110} y={690} rx={30} ry={50} r={-20} />
        <Blob c="#005a62" x={1115} y={800} rx={40} ry={90} />
        <Blob c="#006860" x={1130} y={840} rx={30} ry={40} />
        <Blob c="#005868" x={1020} y={950} rx={50} ry={50} r={40} />
        <Blob c="#006a58" x={1060} y={950} rx={50} ry={50} />
        <Blob c="#006058" x={1080} y={1040} rx={40} ry={70} r={-30} />
        <Blob c="#002a6c" x={1170} y={1040} rx={50} ry={80} r={-20} />
        <Blob c="#004868" x={1150} y={1120} rx={40} ry={60} r={-30} />
        <Blob c="#005c60" x={1178} y={940} rx={20} ry={80} r={-20} />
        <Blob c="#002468" x={1215} y={1090} rx={30} ry={50} />
        <Blob c="#005850" x={1200} y={1180} rx={50} ry={16} r={-30} />
      </g>
      <g filter="url(#fine)">
        <Blob c="#006e18" x={1098} y={790} rx={12} ry={44} r={-8} />
        <Blob c="#00107a" x={1100} y={872} rx={18} ry={24} r={-30} />
        <Blob c="#006838" x={1040} y={918} rx={26} ry={14} />
        <Blob c="#006a30" x={1030} y={970} rx={12} ry={26} r={-35} />
        <Blob c="#0a6c08" x={1060} y={996} rx={12} ry={24} r={-35} />
        <Blob c="#0a6c08" x={1082} y={1030} rx={9} ry={40} r={-32} />
        <Blob c="#000878" x={1146} y={1000} rx={16} ry={20} />
        <Blob c="#4c6a08" x={1266} y={1126} rx={10} ry={26} r={-10} />
      </g>
      <g filter="url(#crisp)">
        <Blob c="#002070" x={1066} y={940} rx={5} ry={12} r={-30} />
        <Blob c="#002070" x={1090} y={998} rx={5} ry={14} r={-50} />
        <Blob c="#2a6c00" x={1086} y={950} rx={4} ry={6} />
        <Blob c="#6a5a00" x={1069} y={992} rx={5} ry={6} />
      </g>
    </g>

    <g clipPath="url(#clipFront)">
      <rect x="960" y="400" width="460" height="760" fill="url(#bandL)" />
      <rect x="1410" y="400" width="560" height="760" fill="url(#bandR)" />
      <g filter="url(#soft)">
        <Blob c="#008420" x={1290} y={960} rx={40} ry={90} r={-35} />
        <Blob c="#007a60" x={1250} y={1020} rx={30} ry={60} r={-20} />
        <Blob c="#007670" x={1370} y={1020} rx={40} ry={50} r={-20} />
        <Blob c="#004480" x={1560} y={995} rx={180} ry={58} />
        <Blob c="#00447c" x={1450} y={975} rx={60} ry={30} />
        <Blob c="#004c74" x={1330} y={1075} rx={70} ry={24} r={8} />
        <Blob c="#006070" x={1430} y={1090} rx={60} ry={50} />
        <Blob c="#00506e" x={1600} y={1070} rx={140} ry={30} />
        <Blob c="#00665c" x={1600} y={1126} rx={220} ry={12} />
        <Blob c="#004876" x={1740} y={1070} rx={60} ry={40} />
        <Blob c="#007a70" x={1745} y={985} rx={20} ry={40} />
        <Blob c="#007c04" x={1805} y={920} rx={42} ry={80} r={-10} />
        <Blob c="#00745c" x={1870} y={1020} rx={50} ry={30} />
        <Blob c="#003a74" x={1860} y={1056} rx={70} ry={14} r={-4} />
        <Blob c="#006c48" x={1900} y={1094} rx={60} ry={10} r={-8} />
      </g>
      <g filter="url(#fine)">
        <Blob c="#4a8200" x={1236} y={846} rx={40} ry={18} r={10} />
        <Blob c="#6a7400" x={1266} y={866} rx={14} ry={16} r={-24} />
        <Blob c="#002c84" x={1390} y={962} rx={46} ry={8} r={6} />
        <Blob c="#7a6000" x={1272} y={1130} rx={12} ry={14} />
        <Blob c="#1c7800" x={1306} y={1134} rx={34} ry={6} />
        <Blob c="#004878" x={1250} y={1060} rx={14} ry={24} r={-30} />
        <Blob c="#086c38" x={1650} y={1136} rx={60} ry={7} />
        <Blob c="#002480" x={1708} y={950} rx={46} ry={8} r={-8} />
        <Blob c="#4a7c00" x={1775} y={836} rx={34} ry={26} />
        <Blob c="#6c6400" x={1762} y={866} rx={16} ry={42} />
        <Blob c="#1c7000" x={1930} y={1108} rx={56} ry={6} r={-5} />
        <Blob c="#4c6c00" x={1944} y={1096} rx={10} ry={12} />
      </g>
      <g filter="url(#crisp)">
        <Blob c="#8c4800" x={1291} y={905} rx={5} ry={24} r={-38} />
        <Blob c="#803800" x={1758} y={876} rx={9} ry={15} />
      </g>
    </g>

    <g clipPath="url(#clipStrip)">
      <path d={P.strip} fill="url(#stripFill)" />
      <g filter="url(#crisp)">
        <Blob c="#0068a4" x={1300} y={1180} rx={90} ry={7} />
        <Blob c="#4ca000" x={1286} y={1138} rx={28} ry={5} />
        <Blob c="#009c80" x={1340} y={1148} rx={60} ry={5} r={-6} />
        <Blob c="#00509c" x={1580} y={1182} rx={110} ry={8} r={-3} />
        <Blob c="#009a58" x={1650} y={1147} rx={70} ry={4} r={-4} />
        <Blob c="#0064a0" x={1760} y={1146} rx={80} ry={5} r={-8} />
        <Blob c="#0062a0" x={1860} y={1152} rx={90} ry={14} r={-6} />
        <Blob c="#00a030" x={1880} y={1120} rx={70} ry={4} r={-5} />
        <Blob c="#40a000" x={1936} y={1116} rx={20} ry={6} />
      </g>
    </g>

    <g fill="none" stroke="#000080" strokeWidth="1">
      <path d={P.innerEdge} />
      <path d={P.edges} />
      <path d={P.strip} />
    </g>

    <path d="M944 594C926 594 914 606 914 632 914 652 924 664 932 676 940 664 932 640 936 622 938 608 946 604 944 594Z" fill="#00008c" />
    <path d="M914 625C914 600 934 588 944 596L966 632C974 660 972 690 958 698 938 704 914 668 914 625Z" fill="none" stroke="#000074" />
    <ellipse cx="987" cy="606" rx="10" ry="21" fill="#00008c" stroke="#000080" />
    <ellipse cx="1573" cy="583" rx="11" ry="21" fill="#00008c" stroke="#000080" />

    <ellipse cx="1035" cy="789" rx="57" ry="112" fill="url(#bore)" stroke="#000070" transform="rotate(-3 1035 789)" />
    <path d="M1081 762 1092 762V801H1082Z" fill="#000090" />
    <path d="M1083 801H1092L1091 822 1088 831 1084 818Z" fill="#e6e8f0" />
    <ellipse cx="1621" cy="766" rx="57" ry="112" fill="url(#bore)" stroke="#000070" transform="rotate(-3 1621 766)" />
    <path d="M1672 720C1665 745 1665 785 1675 809 1680 780 1679 740 1672 720Z" fill="#e3e5ee" stroke="#000070" />

    <path d={P.slot} fill="url(#slotFill)" stroke="#000070" />
    <ellipse cx="1076" cy="971" rx="10" ry="21" fill="url(#pinHole)" stroke="#000070" transform="rotate(8 1076 971)" />
    <path d="M1656 945C1658 924 1674 924 1676 944Z" fill="#0091a4" stroke="#000070" />

    <FixtureMarks />
    <g transform="translate(586 -24)">
      <FixtureMarks />
    </g>

    {FORCES.map(([x, y]) => (
      <g key={x} transform={`translate(${x} ${y})`}>
        <path d="M0 0-10 34" stroke="#8a4708" strokeWidth="5" />
        <path d="M-18 30-6 36-14 47Z" fill="#6b2f00" />
        <path d="M-18 30-10 29-4 36-14 47Z" fill="#7c3a02" />
      </g>
    ))}
  </SceneSvg>
);

const Triad = () => (
  <TriadSvg width="80" height="100" viewBox="320 1335 80 100" role="img" aria-label="Axis triad">
    <g fontFamily="Open Sans, sans-serif" fontSize="12">
      <path d="M336 1394 345 1370" stroke="#0000a8" strokeWidth="5" />
      <path d="M350 1359 351 1373 340 1369Z" fill="#0000a0" />
      <circle cx="346" cy="1366" r="3" fill="#7878f0" />
      <path d="M336 1393 364 1392" stroke="#58c858" strokeWidth="5" />
      <path d="M374 1392 361 1386V1398Z" fill="#005800" />
      <path d="M336 1395 348 1412" stroke="#a80000" strokeWidth="5" />
      <path d="M355 1421 343 1416 353 1408Z" fill="#b80000" />
      <text x="350" y="1352" fill="#6a6af0">Z</text>
      <text x="379" y="1391" fill="#5cae5c">Y</text>
      <text x="356" y="1427" fill="#f06060">X</text>
    </g>
  </TriadSvg>
);

/* ---------- pieces ---------- */

const Tool = ({ icon, label, caret, tone }: { icon: string; label: string; caret?: boolean; tone?: string }) => (
  <ToolGroup>
    <IconButton aria-label={label}><Icon name={icon} size={30} /></IconButton>
    {caret && <CaretButton aria-label={`${label} options`}><Triangle tone={tone} /></CaretButton>}
  </ToolGroup>
);

const RibbonItem = ({ label, icon, w, caret, active }: { label: string; icon: string; w: number; caret?: boolean; active?: boolean }) => (
  <RibbonButton $w={w} $active={active}>
    <Icon name={icon} size={30} />
    <RibbonLabel>{label}</RibbonLabel>
    {caret && <RibbonCaret><Triangle /></RibbonCaret>}
  </RibbonButton>
);

const TreeRow = ({ node }: { node: Node }) => (
  <Row $level={node.level}>
    {node.open || node.closed ? (
      <Expander aria-label={`${node.open ? "Collapse" : "Expand"} ${node.label}`}>
        {node.open ? (
          <Triangle tone="#666" size={12} />
        ) : (
          <Svg aria-hidden="true" width="6" height="12" viewBox="0 0 6 12"><path d="M0 0 6 6 0 12Z" fill="#666" /></Svg>
        )}
      </Expander>
    ) : (
      <Gap />
    )}
    <RowLabel $selected={node.selected} $bold={node.bold} $root={node.root}>
      <GlyphWrap>
        <Icon name={node.icon} />
        {node.sup && <sup>{node.sup}</sup>}
      </GlyphWrap>
      {node.extra && <Icon name={node.extra} />}
      {node.label}
    </RowLabel>
  </Row>
);

const RedArrow = () => (
  <Svg aria-hidden="true" width="40" height="20" viewBox="0 0 40 20">
    <path d="M0 10H28" stroke="#f00" strokeWidth="1.500" />
    <path d="M26 1 40 10 26 19Z" fill="#f00" />
  </Svg>
);

const STEPS: [string, string][] = [
  ["First tab", "M5 2V14M13 2 7 8 13 14Z"],
  ["Previous tab", "M11 2 5 8 11 14Z"],
  ["Next tab", "M5 2 11 8 5 14Z"],
  ["Last tab", "M11 2V14M3 2 9 8 3 14Z"],
];

export default function App() {
  return (
    <Frame>
      <GlobalStyle />
      <SharedPaint />
      <TitleBar>
        <Brand>
          <Svg aria-hidden="true" width="32" height="32" viewBox="0 0 32 32">
            <path
              d="M10 2C18 0 22 2 20 6 18 9 13 11 8 12M8 15C16 14 15 20 12 24 9 28 4 30 2 30L6 19M30 14C24 11 19 14 21 18 23 21 27 22 25 26 23 29 18 29 15 27"
              fill="none" stroke="#da291c" strokeWidth="2.800" strokeLinecap="round"
            />
          </Svg>
          <BrandName><b>SOLID</b>WORKS</BrandName>
          <Svg aria-hidden="true" width="13" height="20" viewBox="0 0 13 20"><path d="M0 0 13 10 0 20Z" fill="#868686" /></Svg>
        </Brand>
        <HomeSlot><IconButton aria-label="Home"><Icon name="home" size={30} /></IconButton></HomeSlot>
        <Tool icon="doc" label="New" caret />
        <Tool icon="open" label="Open" caret />
        <Tool icon="save" label="Save" caret />
        <Tool icon="print" label="Print" caret />
        <Tool icon="undo" label="Undo" caret tone="#999" />
        <Tool icon="redo" label="Redo" caret tone="#999" />
        <SelectTool>
          <SelectMain aria-label="Select"><Icon name="cursor" /></SelectMain>
          <SelectCaret aria-label="Select options"><Triangle /></SelectCaret>
        </SelectTool>
        <ToolRun>
          <IconButton aria-label="Rebuild"><Icon name="traffic" size={30} /></IconButton>
          <IconButton aria-label="File Properties"><Icon name="options" size={30} /></IconButton>
          <Tool icon="gear" label="Options" caret />
        </ToolRun>
        <DocTitle>ARES_beater *</DocTitle>
        <SearchBox>
          <Icon name="prompt" size={20} />
          <SearchInput aria-label="Search Commands" placeholder="Search Commands" />
          <IconButton $w={28} aria-label="Search"><Icon name="search" size={22} /></IconButton>
          <IconButton $w={20} aria-label="Search options"><Triangle tone="#666" /></IconButton>
        </SearchBox>
        <WindowButtons>
          <IconButton $w={32} aria-label="Account"><Icon name="user" /></IconButton>
          <IconButton $w={32} aria-label="Help"><Icon name="help" /></IconButton>
          <IconButton $w={32} aria-label="Minimize"><Icon name="minimize" size={26} /></IconButton>
          <IconButton $w={32} aria-label="Span displays"><Icon name="split" size={26} /></IconButton>
          <IconButton $w={32} aria-label="Restore"><Icon name="restore" size={26} /></IconButton>
          <IconButton $w={32} aria-label="Close"><Icon name="close" size={26} /></IconButton>
        </WindowButtons>
      </TitleBar>

      <Ribbon>
        <RibbonGroup><RibbonItem label={"New\nStudy"} icon="newStudy" w={56} caret /></RibbonGroup>
        <RibbonGroup>{RIBBON_A.map((i) => <RibbonItem key={i.label} {...i} />)}</RibbonGroup>
        <RibbonGroup>
          {RIBBON_B.map((i) => <RibbonItem key={i.label} {...i} />)}
          <RibbonStack $w={175}>
            <RowButton><Icon name="insight" size={30} />Design Insight</RowButton>
            <RowButton><Icon name="plotTools" size={30} />Plot Tools<Triangle /></RowButton>
          </RibbonStack>
        </RibbonGroup>
        <RibbonGroup $last>
          <RibbonStack $w={260}>
            <RowButton><Icon name="report" size={30} />Report</RowButton>
            <RowButton><Icon name="camera" size={30} />Include Image for Report</RowButton>
          </RibbonStack>
        </RibbonGroup>
        <Collapse $w={34} aria-label="Collapse ribbon"><Icon name="up" /></Collapse>
      </Ribbon>

      <Main>
        <TabRow>
          <Tabs role="tablist">
            {TABS.map(([label, w]) => (
              <Tab key={label} role="tab" aria-selected={label === "Simulation"} $w={w} $active={label === "Simulation"}>{label}</Tab>
            ))}
          </Tabs>
          <DocButtons>
            <IconButton $tone="#9a9a9e" aria-label="Dock left"><Icon name="dockLeft" size={26} /></IconButton>
            <IconButton $tone="#9a9a9e" aria-label="Dock right"><Icon name="dockRight" size={26} /></IconButton>
            <IconButton $tone="#9a9a9e" aria-label="Minimize document"><Icon name="minimize" size={26} /></IconButton>
            <IconButton $tone="#9a9a9e" aria-label="Restore document"><Icon name="restore" size={26} /></IconButton>
            <IconButton $tone="#9a9a9e" aria-label="Close document"><Icon name="close" size={26} /></IconButton>
          </DocButtons>
        </TabRow>

        <Workspace>
          <Side>
            <SidePane>
              <Grip $h={26}><Knob /></Grip>
              <PaneTabs>
                <PaneTab $active aria-label="Feature tree"><Icon name="part" /></PaneTab>
                <PaneTab aria-label="Properties"><Icon name="listCard" /></PaneTab>
                <PaneTab aria-label="Configurations"><Icon name="config" /></PaneTab>
                <PaneTab aria-label="Dimensions"><Icon name="target" /></PaneTab>
                <PaneTab aria-label="Display"><Icon name="ball" /></PaneTab>
                <PaneTab aria-label="Simulation study"><Icon name="listCard" /></PaneTab>
                <PaneScroll>
                  <PaneScrollButton aria-label="Scroll tabs left">
                    <Svg aria-hidden="true" width="6" height="10" viewBox="0 0 6 10"><path d="M6 0 0 5 6 10Z" fill="#111" /></Svg>
                  </PaneScrollButton>
                  <PaneScrollButton aria-label="Scroll tabs right">
                    <Svg aria-hidden="true" width="6" height="10" viewBox="0 0 6 10"><path d="M0 0 6 5 0 10Z" fill="#111" /></Svg>
                  </PaneScrollButton>
                </PaneScroll>
              </PaneTabs>
              <FilterBar aria-label="Filter feature tree"><Icon name="funnel" /></FilterBar>
              <TreeScroller>
                <TreeView>
                  <TreeList>{FEATURE_TREE.map((n) => <TreeRow key={n.label} node={n} />)}</TreeList>
                  <Rollback />
                </TreeView>
                <VThumb />
                <HThumb />
              </TreeScroller>
            </SidePane>
            <SidePane $grow>
              <Grip $h={17}><Knob /></Grip>
              <FilterBar aria-label="Filter study tree"><Icon name="funnel" /><Triangle /></FilterBar>
              <TreeList>{STUDY_TREE.map((n) => <TreeRow key={n.label} node={n} />)}</TreeList>
            </SidePane>
          </Side>

          <Viewport>
            <Model />
            <StudyInfo>
              <p>Model name: ARES_beater</p>
              <p>Study name: Static 1(-Default-)</p>
              <p>Plot type: Static nodal stress Stress1</p>
              <p>Deformation scale: 7.77788</p>
            </StudyInfo>
            <Hud>
              {HUD_TOOLS.map(([icon, label, caret]) => (
                <HudPair key={icon}>
                  <IconButton aria-label={label}><Icon name={icon} /></IconButton>
                  {caret && <HudCaret aria-label={`${label} options`}><Triangle tone="#888" /></HudCaret>}
                </HudPair>
              ))}
            </Hud>
            <SideHandle aria-label="Toggle side panel"><Knob /></SideHandle>
            <Legend>
              <LegendTitle>von Mises (N/m^2)</LegendTitle>
              <LegendBody>
                <MarkerColumn><RedArrow /></MarkerColumn>
                <Scale />
                <LegendList>{LEGEND_VALUES.map((v) => <LegendItem key={v}>{v}</LegendItem>)}</LegendList>
              </LegendBody>
              <Yield><RedArrow />Yield strength: 1.700e+09</Yield>
            </Legend>
            <Triad />
            <Watermark>SOLIDWORKS Educational Product. For Instructional Use Only.</Watermark>
            <TaskPane aria-label="Task pane">
              {["compass", "home", "books", "folderOpen", "palette", "ball", "listCard"].map((n, i) => (
                <TaskButton key={n} $active={i === 0} aria-label={n}><Icon name={n} size={30} /></TaskButton>
              ))}
            </TaskPane>
          </Viewport>
        </Workspace>
      </Main>

      <StudyTabs>
        {STEPS.map(([label, d]) => (
          <StepButton key={label} aria-label={label}>
            <Svg aria-hidden="true" width="16" height="16" viewBox="0 0 16 16"><path d={d} fill="#7c7c94" stroke="#7c7c94" /></Svg>
          </StepButton>
        ))}
        <StudyTab $w={89}>Model</StudyTab>
        <StudyTab $w={161}>Motion Study 1</StudyTab>
        <StudyTab $w={112} $active>
          <Svg aria-hidden="true" width="12" height="20" viewBox="0 0 12 20">
            <path d="M1 1 4 3 1 5 4 7 1 9 5 12" fill="none" stroke="#333" />
            <path d="M8 1V6M6 5 8 8 11 5" fill="none" stroke={B} strokeWidth="1.500" />
          </Svg>
          Static 1
        </StudyTab>
        <StudyFill />
      </StudyTabs>
      <StatusBar>
        <span>SOLIDWORKS Student Edition - Academic Use Only</span>
        <StatusMode>Editing Part</StatusMode>
        <StatusUnits>MKS<Triangle size={6} /></StatusUnits>
        <Icon name="tag" size={26} />
      </StatusBar>
    </Frame>
  );
}
